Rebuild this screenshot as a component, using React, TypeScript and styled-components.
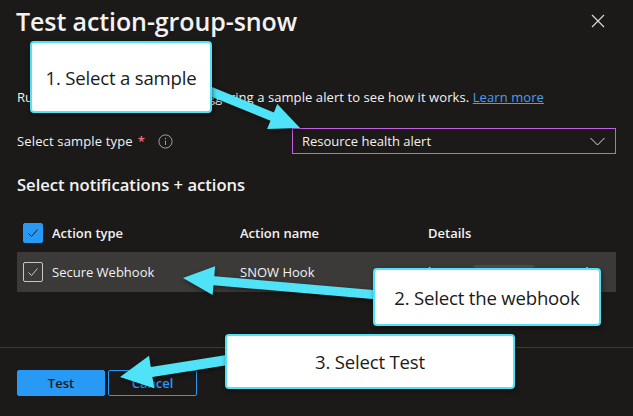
import React from "react";
import styled, { createGlobalStyle } from "styled-components";

const Global = createGlobalStyle`
  html, body { margin: 0; padding: 0; background: #1b1a19; }
  * { box-sizing: border-box; }
`;

const Page = styled.div`
  position: relative;
  width: 633px;
  height: 416px;
  overflow: hidden;
  background: #1b1a19;
  color: #f3f2f1;
  font-family: "Segoe UI", "Open Sans", "Noto Sans", sans-serif;
  font-size: 13px;
  display: flex;
  flex-direction: column;
`;

const Header = styled.header`
  display: flex;
  align-items: center;
  justify-content: space-between;
  height: 40px;
  padding: 2px 28px 0 16px;
`;

const Title = styled.h1`
  margin: 0;
  font-size: 25px;
  font-weight: 600;
  line-height: 34px;
  letter-spacing: -0.1px;
`;

const CloseButton = styled.button`
  display: flex;
  border: 0;
  padding: 0;
  background: transparent;
  cursor: pointer;
`;

const Description = styled.p`
  margin: 48px 0 0;
  padding: 0 17px;
  line-height: 18px;
  letter-spacing: 0.08px;
`;

const Link = styled.a`
  color: #479ef5;
  text-decoration: underline;
`;

const FormRow = styled.div`
  display: flex;
  align-items: center;
  margin-top: 22px;
  padding: 0 17px;
`;

const LabelGroup = styled.div`
  width: 275px;
  display: flex;
  align-items: center;
  letter-spacing: 0.15px;
`;

const Required = styled.span`
  color: #f1707b;
  margin-left: 5px;
  font-weight: 600;
`;

const InfoIcon = styled.svg`
  margin-left: 13px;
`;

const Dropdown = styled.div`
  flex: 1;
  height: 26px;
  border: 1px solid #c25fe2;
  display: flex;
  align-items: center;
  justify-content: space-between;
  padding: 0 10px 0 9px;
`;

const SectionTitle = styled.h2`
  margin: 20px 0 0;
  padding: 0 17px;
  font-size: 16.6px;
  font-weight: 600;
  line-height: 22px;
`;

const Table = styled.div`
  margin: 17px 17px 0;
  display: flex;
  flex-direction: column;
`;

const Row = styled.div<{ $head?: boolean }>`
  display: grid;
  grid-template-columns: 35px 188px 188px 1fr;
  align-items: center;
  height: ${(p) => (p.$head ? "39px" : "40px")};
  background: ${(p) => (p.$head ? "transparent" : "#3b3a39")};
  font-weight: ${(p) => (p.$head ? 600 : 400)};
`;

const CheckCell = styled.div`
  padding-left: 6px;
  display: flex;
`;

const Box = styled.span<{ $filled?: boolean }>`
  width: 20px;
  height: 20px;
  border-radius: 2px;
  display: flex;
  align-items: center;
  justify-content: center;
  background: ${(p) => (p.$filled ? "#2899f5" : "transparent")};
  border: 1px solid ${(p) => (p.$filled ? "#2899f5" : "#c8c6c4")};
`;

const Cell = styled.div`
  white-space: nowrap;
  overflow: hidden;
`;

const Redact = styled.span`
  display: inline-block;
  width: 60px;
  height: 16px;
  background: #4d4c4b;
  vertical-align: middle;
  margin: 0 14px 0 2px;
`;

const Footer = styled.footer`
  margin-top: auto;
  border-top: 1px solid #3b3a39;
  padding: 22px 17px 20px;
  display: flex;
  gap: 3px;
`;

const Button = styled.button<{ $primary?: boolean }>`
  height: 26px;
  width: ${(p) => (p.$primary ? "88px" : "89px")};
  border-radius: 2px;
  font-family: inherit;
  font-size: 13px;
  font-weight: 600;
  border: 1px solid #2899f5;
  background: ${(p) => (p.$primary ? "#2899f5" : "transparent")};
  color: ${(p) => (p.$primary ? "#1b1a19" : "#2899f5")};
  padding: 0;
`;

const Overlay = styled.svg`
  position: absolute;
  left: 0;
  top: 0;
  pointer-events: none;
  filter: drop-shadow(1px 2px 2px rgba(0, 0, 0, 0.45));
`;

const Callout = styled.div<{ $x: number; $y: number; $w: number; $h: number }>`
  position: absolute;
  left: ${(p) => p.$x}px;
  top: ${(p) => p.$y}px;
  width: ${(p) => p.$w}px;
  height: ${(p) => p.$h}px;
  background: #ffffff;
  border: 2px solid #50e3f8;
  border-radius: 4px;
  box-shadow: 1px 2px 4px rgba(0, 0, 0, 0.5);
  display: flex;
  align-items: center;
  justify-content: center;
  color: #1a1a1a;
  font-family: "Segoe UI", "Open Sans", sans-serif;
  font-size: 18.6px;
  font-weight: 400;
  letter-spacing: -0.2px;
`;

function arrow(sx: number, sy: number, tx: number, ty: number, shaft: number, headW: number, headL: number) {
  const dx = tx - sx;
  const dy = ty - sy;
  const len = Math.hypot(dx, dy);
  const ux = dx / len;
  const uy = dy / len;
  const nx = -uy;
  const ny = ux;
  const bx = tx - ux * headL;
  const by = ty - uy * headL;
  const pts = [
    [sx + (nx * shaft) / 2, sy + (ny * shaft) / 2],
    [bx + (nx * shaft) / 2, by + (ny * shaft) / 2],
    [bx + (nx * headW) / 2, by + (ny * headW) / 2],
    [tx, ty],
    [bx - (nx * headW) / 2, by - (ny * headW) / 2],
    [bx - (nx * shaft) / 2, by - (ny * shaft) / 2],
    [sx - (nx * shaft) / 2, sy - (ny * shaft) / 2],
  ];
  return pts.map((p) => p.map((v) => v.toFixed(1)).join(",")).join(" ");
}

const Check = ({ color }: { color: string }) => (
  <svg width="14" height="14" viewBox="0 0 14 14">
    <path d="M2.5 7.5 L5.5 10.5 L11.5 3.5" fill="none" stroke={color} strokeWidth="1" />
  </svg>
);

export default function App() {
  return (
    <>
      <Global />
      <Page>
        <Header>
          <Title>Test action-group-snow</Title>
          <CloseButton aria-label="Close">
            <svg width="14" height="14" viewBox="0 0 14 14">
              <path d="M1 1 L13 13 M13 1 L1 13" stroke="#e1dfdd" strokeWidth="1.1" />
            </svg>
          </CloseButton>
        </Header>
        <Description>
          Run a test of your actions by triggering a sample alert to see how it works.{" "}
          <Link href="#">Learn more</Link>
        </Description>
        <FormRow>
          <LabelGroup>
            Select sample type<Required>*</Required>
            <InfoIcon width="15" height="15" viewBox="0 0 15 15">
              <circle cx="7.5" cy="7.5" r="6.6" fill="none" stroke="#a19f9d" strokeWidth="1" />
              <circle cx="7.5" cy="4.6" r="0.75" fill="#a19f9d" />
              <path d="M7.5 6.5 V11" stroke="#a19f9d" strokeWidth="1" />
            </InfoIcon>
          </LabelGroup>
          <Dropdown>
            <span>Resource health alert</span>
            <svg width="15" height="9" viewBox="0 0 15 9">
              <path d="M0.5 1 L7.5 8 L14.5 1" fill="none" stroke="#e1dfdd" strokeWidth="1" />
            </svg>
          </Dropdown>
        </FormRow>
        <SectionTitle>Select notifications + actions</SectionTitle>
        <Table>
          <Row $head>
            <CheckCell>
              <Box $filled>
                <Check color="#1b1a19" />
              </Box>
            </CheckCell>
            <Cell>Action type</Cell>
            <Cell>Action name</Cell>
            <Cell>Details</Cell>
          </Row>
          <Row>
            <CheckCell>
              <Box>
                <Check color="#c8c6c4" />
              </Box>
            </CheckCell>
            <Cell>Secure Webhook</Cell>
            <Cell>SNOW Hook</Cell>
            <Cell>
              https://
              <Redact />
              4236ab
            </Cell>
          </Row>
        </Table>
        <Footer>
          <Button $primary>Test</Button>
          <Button>Cancel</Button>
        </Footer>

        <Overlay width="633" height="416" viewBox="0 0 633 416">
          <polygon points={arrow(190, 83, 300, 128, 9, 27, 30)} fill="#50e3f8" />
          <polygon points={arrow(390, 296, 183, 278, 9, 29, 31)} fill="#50e3f8" />
          <polygon points={arrow(240, 358, 120, 377, 10, 33, 32)} fill="#50e3f8" />
        </Overlay>
        <Callout $x={30} $y={41} $w={182} $h={72}>1. Select a sample</Callout>
        <Callout $x={373} $y={268} $w={228} $h={58}>2. Select the webhook</Callout>
        <Callout $x={225} $y={334} $w={290} $h={55}>3. Select Test</Callout>
      </Page>
    </>
  );
}
